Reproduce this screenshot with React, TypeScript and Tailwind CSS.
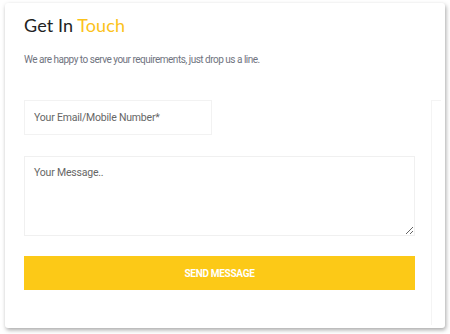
const App = () => {
  return (
    <div className="w-[450px] h-[334px] bg-white pt-[3px] pl-[5px]">
      {/* card */}
      <div className="relative w-[440px] h-[325px] bg-white rounded-[3px] shadow-[1px_2px_4px_rgba(0,0,0,0.35)] pl-[19px] pt-[9px] font-['Roboto',sans-serif]">
        <h1 className="font-['Lato',sans-serif] text-[18px] leading-[26px] text-[#222] tracking-[0.1px]">
          Get In <span className="text-[#fbc21b]">Touch</span>
        </h1>
        <p className="mt-[15px] text-[10px] leading-[14px] text-[#707480] tracking-[-0.5px]">
          We are happy to serve your requirements, just drop us a line.
        </p>

        <div className="mt-[33px] flex flex-col w-[391px]">
          <input
            type="text"
            placeholder="Your Email/Mobile Number*"
            className="w-[188px] h-[35px] border border-[#f2f2f2] px-[9px] text-[10.5px] tracking-[-0.2px] text-[#555] placeholder:text-[#666] outline-none"
          />
          <textarea
            placeholder="Your Message.."
            className="mt-[21px] w-[391px] h-[80px] border border-[#f0f0f0] px-[9px] py-[8px] text-[10.5px] tracking-[-0.2px] text-[#555] placeholder:text-[#666] outline-none resize-y"
          />
          <button className="mt-[20px] w-[391px] h-[34px] bg-[#fcc917] text-white text-[10px] font-bold tracking-[-0.3px]">
            SEND MESSAGE
          </button>
        </div>

        {/* faint column edge on the right */}
        <div className="absolute left-[426px] top-[97px] w-[10px] h-[225px] border-l border-t border-[#f4f4f4]" />
      </div>
    </div>
  );
};

export default App;
